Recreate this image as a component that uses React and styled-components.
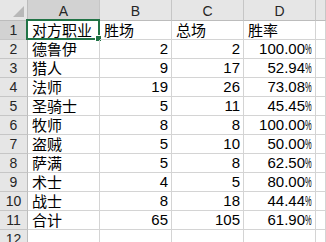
import React from 'react'
import styled, { createGlobalStyle } from 'styled-components'

const GlobalStyle = createGlobalStyle`
    html, body {
        margin: 0;
        padding: 0;
        background: #ffffff;
    }
`;

const Sheet = styled.div`
    display: grid;
    grid-template-columns: 28px repeat(4, 72px) 1fr;
    grid-template-rows: 21px repeat(12, 19px);
    width: 326px;
    height: 242px;
    overflow: hidden;
    background: #ffffff;
    font-family: "Liberation Sans", "Noto Sans CJK SC", sans-serif;
`;

const Corner = styled.div`
    position: relative;
    background: #e6e6e6;
    border-right: 1px solid #bcbcbc;
    border-bottom: 1px solid #bcbcbc;
    box-sizing: border-box;

    &::after {
        content: "";
        position: absolute;
        right: 3px;
        bottom: 3px;
        width: 0;
        height: 0;
        border-left: 11px solid transparent;
        border-bottom: 11px solid #b8b8b8;
    }
`;

const ColHead = styled.div`
    display: flex;
    align-items: center;
    justify-content: center;
    box-sizing: border-box;
    background: ${({ active }) => (active ? '#d2d2d2' : '#e6e6e6')};
    border-right: 1px solid #c6c6c6;
    border-bottom: 1px solid #bcbcbc;
    color: #262626;
    font-size: 14px;
    padding-top: 2px;
`;

const RowHead = styled.div`
    display: flex;
    align-items: flex-end;
    justify-content: center;
    box-sizing: border-box;
    background: ${({ active }) => (active ? '#d2d2d2' : '#e6e6e6')};
    border-right: 1px solid #bcbcbc;
    border-bottom: 1px solid #c6c6c6;
    color: #262626;
    font-size: 14px;
    line-height: 18px;
`;

const Cell = styled.div`
    position: relative;
    display: flex;
    align-items: flex-end;
    justify-content: ${({ num }) => (num ? 'flex-end' : 'flex-start')};
    box-sizing: border-box;
    padding: 0 ${({ num }) => (num ? '3px' : '0')} 0 ${({ num }) => (num ? '0' : '4px')};
    border-right: 1px solid #d4d4d4;
    border-bottom: 1px solid #d4d4d4;
    color: #000000;
    font-family: ${({ num }) => (num ? '"Liberation Sans", sans-serif' : '"Noto Sans CJK SC", sans-serif')};
    font-size: 15px;
    line-height: 18px;
    white-space: nowrap;
`;

const Selection = styled.div`
    position: absolute;
    top: -2px;
    left: -2px;
    right: -1px;
    bottom: -1px;
    border: 2px solid #217346;
    pointer-events: none;
`;

const Handle = styled.div`
    position: absolute;
    right: -4px;
    bottom: -4px;
    width: 5px;
    height: 5px;
    background: #217346;
    border: 1px solid #ffffff;
`;

const PctSign = styled.span`
    display: inline-block;
    width: 7px;
    transform: scaleX(0.5);
    transform-origin: left center;
`;

const rows = [
    ['对方职业', '胜场', '总场', '胜率'],
    ['德鲁伊', 2, 2, '100.00'],
    ['猎人', 9, 17, '52.94'],
    ['法师', 19, 26, '73.08'],
    ['圣骑士', 5, 11, '45.45'],
    ['牧师', 8, 8, '100.00'],
    ['盗贼', 5, 10, '50.00'],
    ['萨满', 5, 8, '62.50'],
    ['术士', 4, 5, '80.00'],
    ['战士', 8, 18, '44.44'],
    ['合计', 65, 105, '61.90'],
    ['', '', '', ''],
];

const cols = ['A', 'B', 'C', 'D', ''];

const App = () => {
    return (
        <>
            <GlobalStyle />
            <Sheet>
                <Corner />
                {cols.map((c) => (
                    <ColHead key={c || 'E'} active={c === 'A'}>{c}</ColHead>
                ))}

                {rows.map((r, i) => {
                    const head = i === 0
                    return (
                        <React.Fragment key={i}>
                            <RowHead active={i === 0}>{i + 1}</RowHead>
                            <Cell>
                                {r[0]}
                                {i === 0 && (
                                    <Selection>
                                        <Handle />
                                    </Selection>
                                )}
                            </Cell>
                            <Cell num={!head}>{r[1]}</Cell>
                            <Cell num={!head}>{r[2]}</Cell>
                            <Cell num={!head}>
                                {head || r[3] === '' ? r[3] : (
                                    <span>{r[3]}<PctSign>%</PctSign></span>
                                )}
                            </Cell>
                            <Cell />
                        </React.Fragment>
                    )
                })}
            </Sheet>
        </>
    )
}

export default App
